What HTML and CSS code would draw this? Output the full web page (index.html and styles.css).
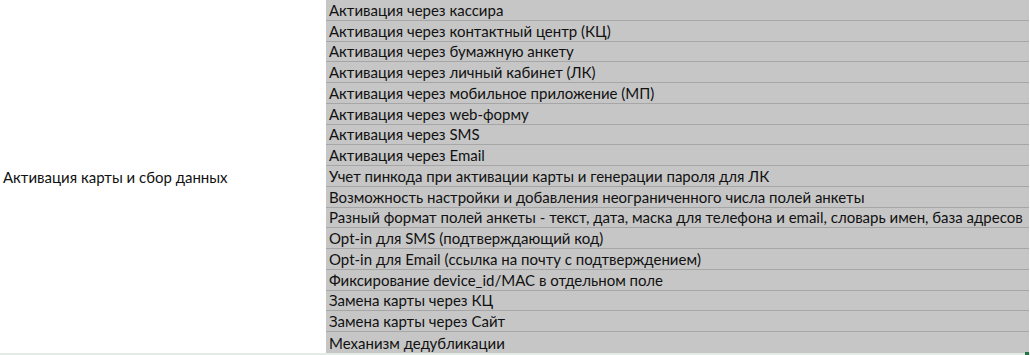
FILE: index.html
```html
<!DOCTYPE html>
<html lang="ru">
<head>
<meta charset="utf-8">
<link rel="stylesheet" href="styles.css">
</head>
<body>
<div class="sheet">
  <div class="group">Активация карты и сбор данных</div>
  <div class="list">
    <div class="row">Активация через кассира</div>
    <div class="row">Активация через контактный центр (КЦ)</div>
    <div class="row">Активация через бумажную анкету</div>
    <div class="row">Активация через личный кабинет (ЛК)</div>
    <div class="row">Активация через мобильное приложение (МП)</div>
    <div class="row">Активация через web-форму</div>
    <div class="row">Активация через SMS</div>
    <div class="row">Активация через Email</div>
    <div class="row">Учет пинкода при активации карты и генерации пароля для ЛК</div>
    <div class="row">Возможность настройки и добавления неограниченного числа полей анкеты</div>
    <div class="row">Разный формат полей анкеты - текст, дата, маска для телефона и email, словарь имен, база адресов</div>
    <div class="row">Opt-in для SMS (подтверждающий код)</div>
    <div class="row">Opt-in для Email (ссылка на почту с подтверждением)</div>
    <div class="row">Фиксирование device_id/MAC в отдельном поле</div>
    <div class="row">Замена карты через КЦ</div>
    <div class="row">Замена карты через Сайт</div>
    <div class="row">Механизм дедубликации</div>
  </div>
</div>
<div class="foot"><span class="handle"></span></div>
</body>
</html>
```
FILE: styles.css
```css
html, body {
  margin: 0;
  padding: 0;
  background: #ffffff;
}
body {
  font-family: "Lato", "Open Sans", sans-serif;
  font-size: 15px;
  color: #111111;
  width: 1030px;
  height: 355px;
  overflow: hidden;
}
.sheet {
  display: flex;
  height: 353px;
}
.group {
  width: 326px;
  flex: none;
  display: flex;
  align-items: center;
  padding-left: 3px;
  box-sizing: border-box;
}
.list {
  width: 703px;
  flex: none;
  display: grid;
  grid-template-rows: repeat(17, 1fr);
  background: #c6c6c6;
}
.row {
  border-bottom: 1px solid #a6a6a6;
  padding-left: 3px;
  display: flex;
  align-items: flex-end;
  padding-bottom: 1px;
  line-height: 18px;
  white-space: nowrap;
  overflow: hidden;
}
.row:last-child {
  border-bottom: none;
}
.foot {
  height: 2px;
  background: #e3ebe6;
  position: relative;
}
.handle {
  position: absolute;
  right: 1px;
  top: -1px;
  width: 4px;
  height: 4px;
  background: #217346;
}
```
